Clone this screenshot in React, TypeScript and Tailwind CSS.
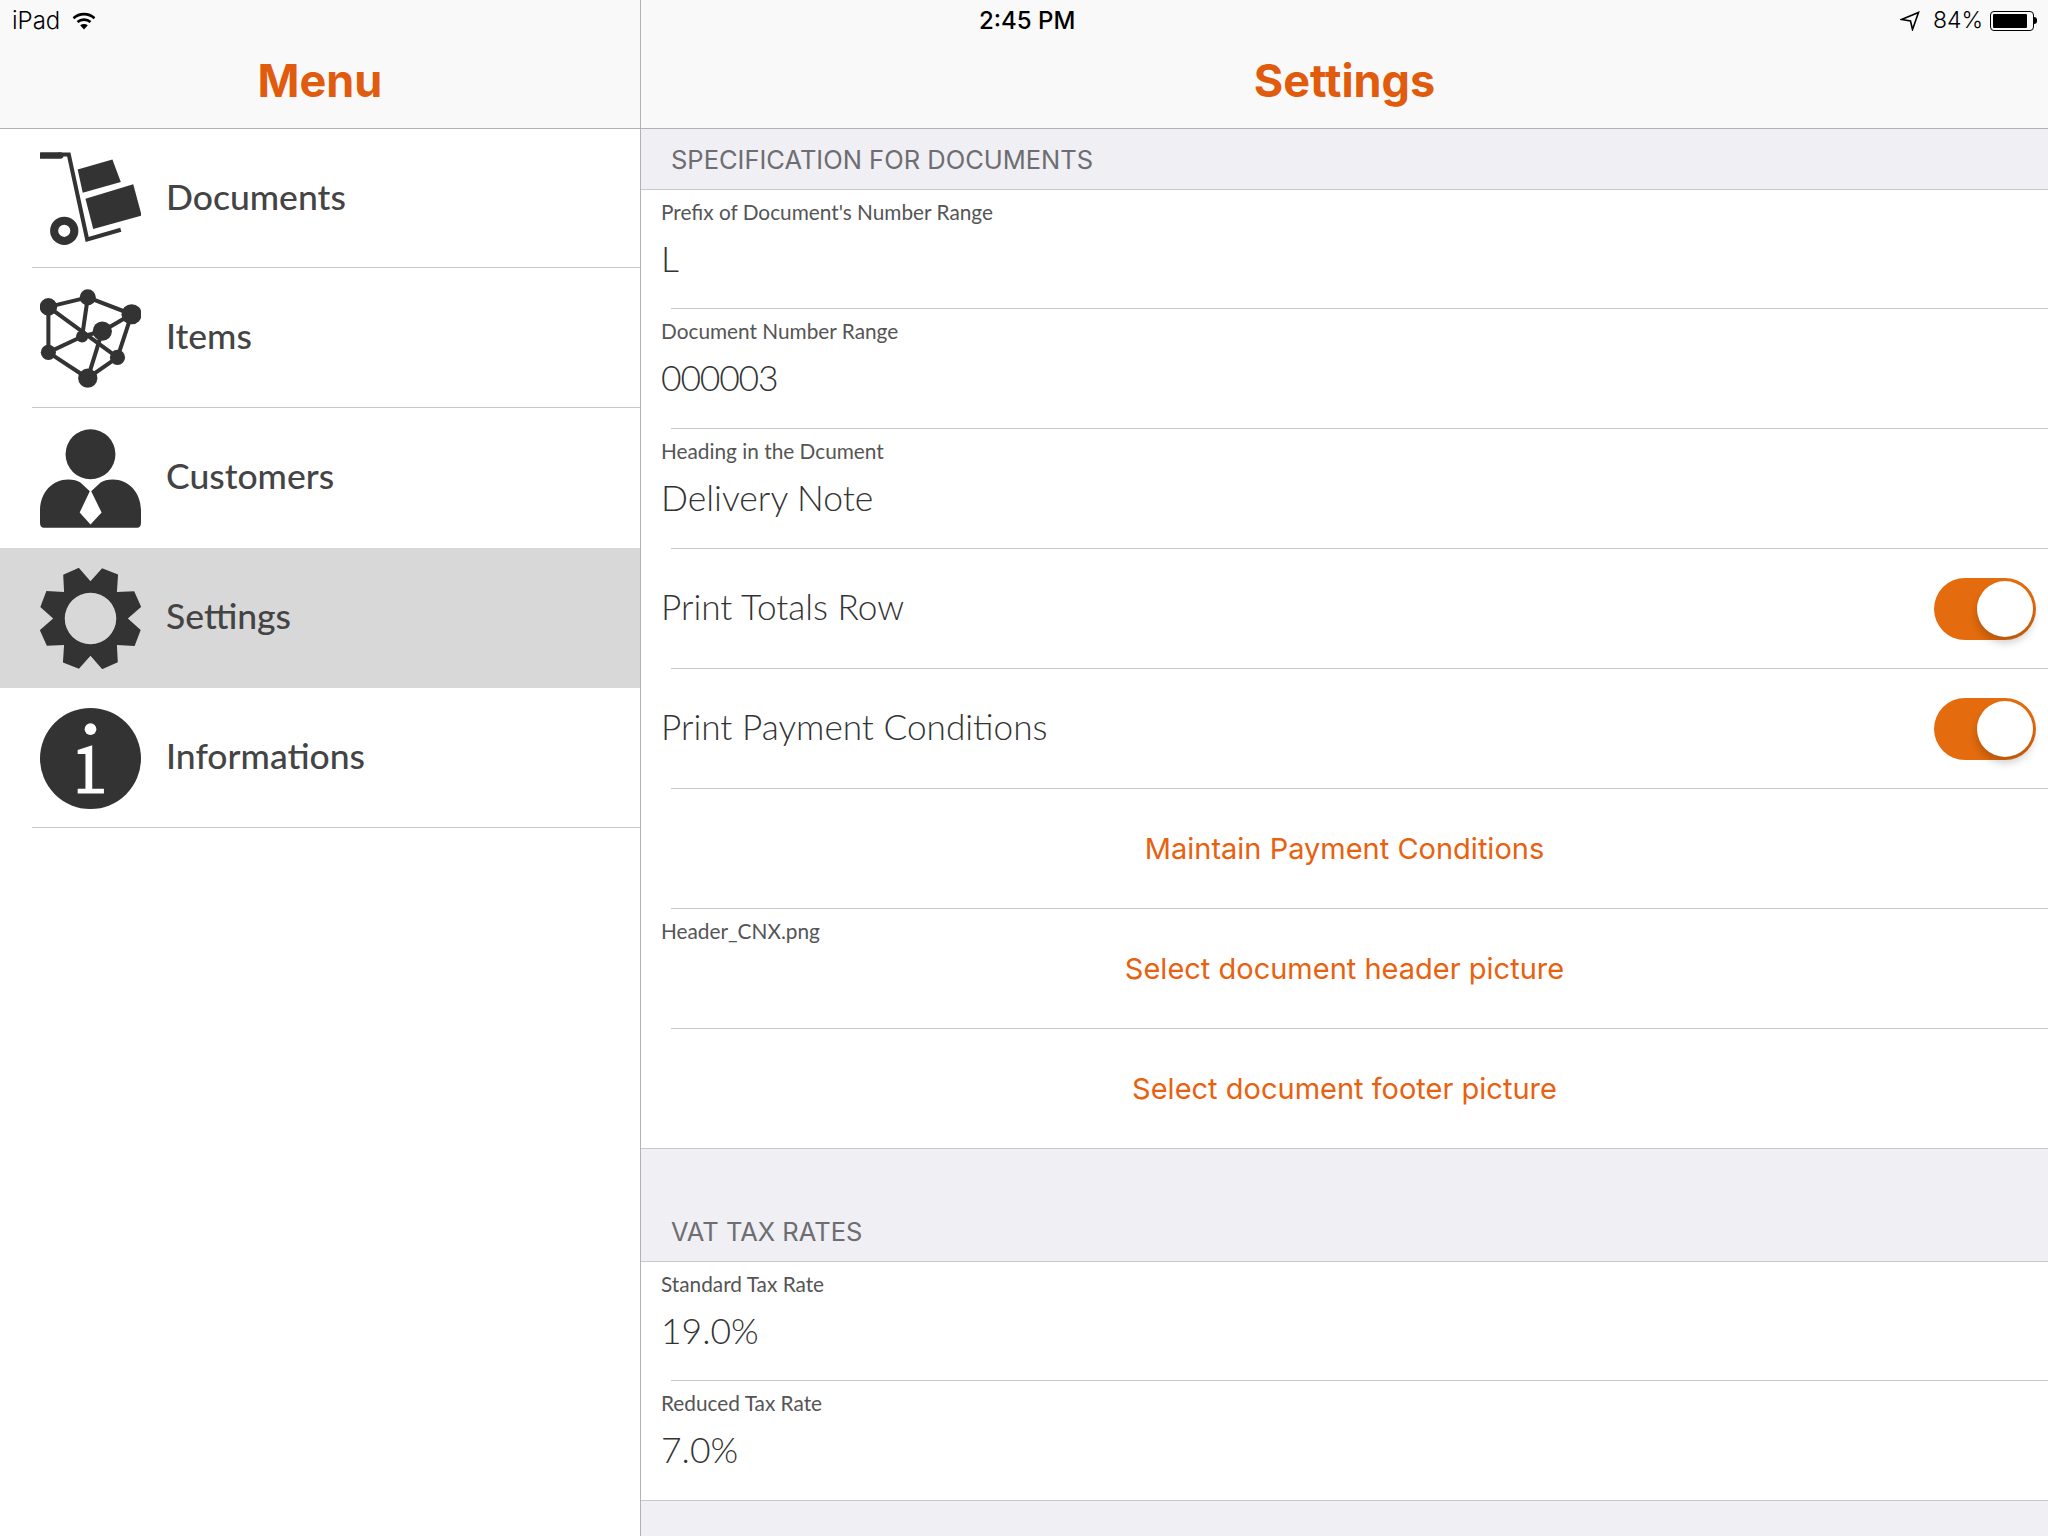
import type { ReactNode } from 'react';

const gearPath = () => {
  const pts: string[] = [];
  const pt = (r: number, deg: number) => {
    const a = (deg * Math.PI) / 180;
    return `${(50 + r * Math.sin(a)).toFixed(2)} ${(50 - r * Math.cos(a)).toFixed(2)}`;
  };
  for (let i = 0; i < 8; i++) {
    const c = 22.5 + i * 45;
    pts.push(pt(37, c - 22.5), pt(51, c - 9.5), pt(51.5, c + 9.5));
  }
  return `M${pts.join('L')}Z M75.5 50a25.5 25.5 0 1 0 -51 0a25.5 25.5 0 1 0 51 0Z`;
};

function TrolleyIcon() {
  return (
    <svg viewBox="0 0 100 100" className="w-[101px] h-[101px]" fill="#333333">
      <path d="M1 7.5H20" stroke="#333333" strokeWidth="6.5" strokeLinecap="round" fill="none" />
      <path d="M18 6.5H28.5L46.7 90.5L80 81" stroke="#333333" strokeWidth="4" fill="none" />
      <circle cx="24" cy="82" r="10" fill="none" stroke="#333333" strokeWidth="8" />
      <path d="M37.3 21.3L71.7 11.3L80 33.7L42.3 44.3Z" />
      <path d="M45 50.3L92.3 36L100.7 67L52.7 80.3Z" />
    </svg>
  );
}

function NetworkIcon() {
  const nodes = [
    [8.3, 18.7, 8.7],
    [47.3, 9.3, 8],
    [90.7, 26, 10],
    [61.7, 42.7, 9.5],
    [41.7, 48, 6],
    [8.3, 63.7, 7.5],
    [76.7, 68.7, 7.5],
    [47.3, 89.3, 9.5],
  ];
  const edges = [
    [0, 1], [1, 2], [2, 3], [3, 4], [4, 5], [0, 5],
    [5, 7], [7, 6], [6, 2], [1, 4], [0, 6], [3, 7],
  ];
  return (
    <svg viewBox="0 0 100 100" className="w-[101px] h-[101px]" fill="#333333">
      {edges.map(([a, b]) => (
        <line
          key={`${a}-${b}`}
          x1={nodes[a][0]}
          y1={nodes[a][1]}
          x2={nodes[b][0]}
          y2={nodes[b][1]}
          stroke="#333333"
          strokeWidth="4"
        />
      ))}
      {nodes.map(([x, y, r]) => (
        <circle key={`${x}-${y}`} cx={x} cy={y} r={r} />
      ))}
    </svg>
  );
}

function PersonIcon() {
  return (
    <svg viewBox="0 0 100 100" className="w-[101px] h-[101px]" fill="#333333">
      <circle cx="50" cy="26" r="24.7" />
      <path d="M0 82C0 64 12 51 28 51C33 51 37 52 40 54L49.3 62.7L39.3 83.7L50 95.5L61 83.7L50.7 62.7L60 54C63 52 67 51 72 51C88 51 100 64 100 82V94Q100 98.7 96 98.7H4Q0 98.7 0 94Z" />
    </svg>
  );
}

function GearIcon() {
  return (
    <svg viewBox="0 0 100 100" className="w-[101px] h-[101px]" fill="#333333">
      <path d={gearPath()} fillRule="evenodd" />
    </svg>
  );
}

function InfoIcon() {
  return (
    <svg viewBox="0 0 100 100" className="w-[101px] h-[101px]">
      <circle cx="50" cy="50" r="50" fill="#333333" />
      <circle cx="50" cy="21" r="5.8" fill="#ffffff" />
      <path d="M37.3 41.5L51.7 37V80H63.3V84.7H37.3V80H45V45.5H37.3Z" fill="#ffffff" />
    </svg>
  );
}

function WifiIcon() {
  return (
    <svg viewBox="0 0 24 18" className="w-6 h-[18px]" fill="none" stroke="#000000" strokeWidth="2.6">
      <path d="M1.5 6.2C7.5 0.8 16.5 0.8 22.5 6.2" />
      <path d="M5.5 10C9.2 6.8 14.8 6.8 18.5 10" />
      <path d="M12 17.5L8.2 13.2C10.4 11.6 13.6 11.6 15.8 13.2Z" fill="#000000" stroke="none" />
    </svg>
  );
}

function Toggle() {
  return (
    <div className="relative w-[102px] h-[62px] rounded-full bg-[#e46c0e]">
      <div className="absolute right-[3px] top-[3px] w-14 h-14 rounded-full bg-white shadow-[0_6px_8px_rgba(0,0,0,0.2)]" />
    </div>
  );
}

const menu = [
  { title: 'Documents', icon: <TrolleyIcon /> },
  { title: 'Items', icon: <NetworkIcon /> },
  { title: 'Customers', icon: <PersonIcon /> },
  { title: 'Settings', icon: <GearIcon />, active: true },
  { title: 'Informations', icon: <InfoIcon /> },
];

function Field({ label, value, narrow }: { label: string; value: string; narrow?: boolean }) {
  return (
    <>
      <div className="pl-5 pt-[10px] text-[20.8px] leading-[24px] text-[#555555] font-['Lato',sans-serif]">{label}</div>
      <div
        className={`pl-5 pt-[15px] text-[35.5px] leading-[40px] text-[#333333] font-light font-['Lato',sans-serif] ${narrow ? 'tracking-[-1.2px]' : ''}`}
      >
        {value}
      </div>
    </>
  );
}

function Row({ children, inset = true, first }: { children: ReactNode; inset?: boolean; first?: boolean }) {
  return (
    <div className={`${first ? 'h-[119px]' : 'h-[120px]'} flex flex-col bg-white`}>
      <div className="flex-1 min-h-0 relative">{children}</div>
      <div className={inset ? 'ml-[30px] h-px bg-[#c8c7cc]' : 'h-px bg-[#c8c7cc]'} />
    </div>
  );
}

function ToggleRow({ label }: { label: string }) {
  return (
    <div className="h-full flex items-center justify-between pl-5 pr-3">
      <span className="pb-1 text-[35.2px] font-light text-[#333333] font-['Lato',sans-serif]">{label}</span>
      <Toggle />
    </div>
  );
}

function LinkRow({ label, note }: { label: string; note?: string }) {
  return (
    <div className="h-full relative flex items-center justify-center">
      {note && (
        <span className="absolute left-5 top-[10px] text-[20.8px] leading-[24px] text-[#555555] font-['Lato',sans-serif]">
          {note}
        </span>
      )}
      <span className="text-[29px] text-[#e8610f] font-['Inter',sans-serif]">{label}</span>
    </div>
  );
}

function SectionTitle({ title, tall }: { title: string; tall?: boolean }) {
  return (
    <div
      className={`${tall ? 'h-[113px]' : 'h-[61px]'} flex items-end pl-[30px] pb-[14px] bg-[#efeff4] border-b border-[#c8c7cc] text-[25.5px] leading-[30px] text-[#6d6d72] font-['Inter',sans-serif]`}
    >
      {title}
    </div>
  );
}

export default function App() {
  return (
    <div className="w-[2048px] h-[1536px] flex overflow-hidden bg-white">
      <div className="w-[641px] shrink-0 h-full flex flex-col border-r border-[#b2b2b2]">
        <div className="h-[129px] shrink-0 bg-[#f9f9f9] border-b border-[#b2b2b2] flex flex-col">
          <div className="h-[41px] flex items-center gap-3 pl-3 text-[24px] font-light text-black font-['Inter',sans-serif]">
            <span>iPad</span>
            <WifiIcon />
          </div>
          <div className="flex-1 flex items-center justify-center pb-[8px] text-[45px] font-bold text-[#e15b0f] font-['Inter',sans-serif]">
            Menu
          </div>
        </div>
        {menu.map((item, i) => (
          <div
            key={item.title}
            className={`${i === 0 ? 'h-[139px]' : 'h-[140px]'} relative flex items-center pl-10 gap-[25px] ${item.active ? 'bg-[#d8d8d8]' : ''}`}
          >
            {item.icon}
            <span className="pb-1 text-[35.5px] text-[#444444] font-medium font-['Lato',sans-serif]">{item.title}</span>
            {!item.active && item.title !== 'Customers' && (
              <div className="absolute left-8 right-0 bottom-0 h-px bg-[#c8c7cc]" />
            )}
          </div>
        ))}
      </div>
      <div className="flex-1 min-w-0 h-full flex flex-col bg-[#efeff4]">
        <div className="h-[129px] shrink-0 bg-[#f9f9f9] border-b border-[#b2b2b2] flex flex-col">
          <div className="h-[41px] flex items-center pl-[338px] pr-[11px] text-[24px] text-black font-['Inter',sans-serif]">
            <span className="font-medium">2:45 PM</span>
            <div className="ml-auto flex items-center font-light">
              <svg viewBox="0 0 20 20" className="w-5 h-5 mr-[13px]" fill="none" stroke="#000000" strokeWidth="1.6">
                <path d="M1.5 8.5L18.5 1.5L12.5 18.5L10.5 10Z" strokeLinejoin="miter" />
              </svg>
              <span className="mr-[7px] text-[23px]">84%</span>
              <div className="flex items-center">
                <div className="w-[44px] h-[20px] rounded-[4px] border border-black p-[2px]">
                  <div className="w-[34px] h-full bg-black rounded-[1px]" />
                </div>
                <div className="w-[3px] h-[7px] bg-black rounded-r-sm" />
              </div>
            </div>
          </div>
          <div className="flex-1 flex items-center justify-center pb-[8px] text-[45px] font-bold text-[#e15b0f] font-['Inter',sans-serif]">
            Settings
          </div>
        </div>
        <SectionTitle title="SPECIFICATION FOR DOCUMENTS" />
        <Row first><Field label="Prefix of Document's Number Range" value="L" /></Row>
        <Row><Field label="Document Number Range" value="000003" narrow /></Row>
        <Row><Field label="Heading in the Dcument" value="Delivery Note" /></Row>
        <Row><ToggleRow label="Print Totals Row" /></Row>
        <Row><ToggleRow label="Print Payment Conditions" /></Row>
        <Row><LinkRow label="Maintain Payment Conditions" /></Row>
        <Row><LinkRow label="Select document header picture" note="Header_CNX.png" /></Row>
        <Row inset={false}><LinkRow label="Select document footer picture" /></Row>
        <SectionTitle title="VAT TAX RATES" tall />
        <Row first><Field label="Standard Tax Rate" value="19.0%" /></Row>
        <Row inset={false}><Field label="Reduced Tax Rate" value="7.0%" /></Row>
      </div>
    </div>
  );
}
